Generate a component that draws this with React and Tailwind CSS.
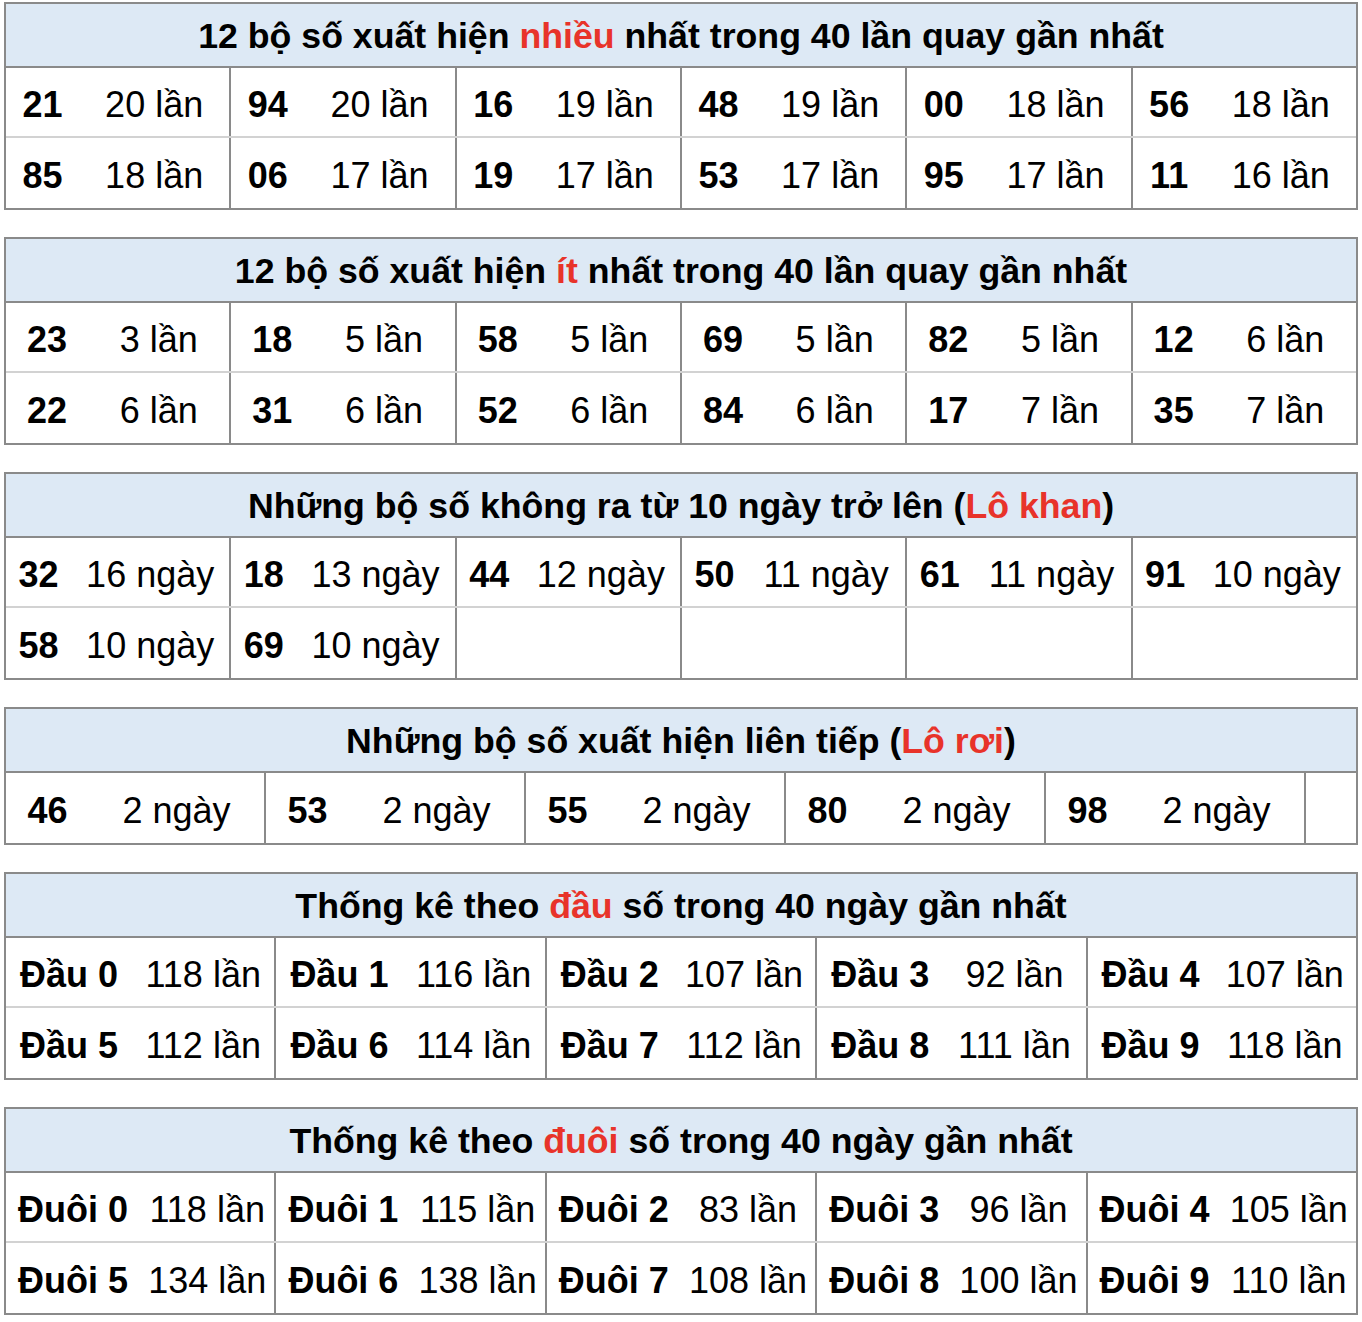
const RED = 'text-[#e8332a]'

const tables = [
  {
    title: <>12 bộ số xuất hiện <span className={RED}>nhiều</span> nhất trong 40 lần quay gần nhất</>,
    numW: 'w-[73px]',
    groupW: 'flex-1',
    rows: [
      [['21', '20 lần'], ['94', '20 lần'], ['16', '19 lần'], ['48', '19 lần'], ['00', '18 lần'], ['56', '18 lần']],
      [['85', '18 lần'], ['06', '17 lần'], ['19', '17 lần'], ['53', '17 lần'], ['95', '17 lần'], ['11', '16 lần']],
    ],
  },
  {
    title: <>12 bộ số xuất hiện <span className={RED}>ít</span> nhất trong 40 lần quay gần nhất</>,
    numW: 'w-[82px]',
    groupW: 'flex-1',
    rows: [
      [['23', '3 lần'], ['18', '5 lần'], ['58', '5 lần'], ['69', '5 lần'], ['82', '5 lần'], ['12', '6 lần']],
      [['22', '6 lần'], ['31', '6 lần'], ['52', '6 lần'], ['84', '6 lần'], ['17', '7 lần'], ['35', '7 lần']],
    ],
  },
  {
    title: <>Những bộ số không ra từ 10 ngày trở lên (<span className={RED}>Lô khan</span>)</>,
    numW: 'w-[65px]',
    groupW: 'flex-1',
    rows: [
      [['32', '16 ngày'], ['18', '13 ngày'], ['44', '12 ngày'], ['50', '11 ngày'], ['61', '11 ngày'], ['91', '10 ngày']],
      [['58', '10 ngày'], ['69', '10 ngày'], ['', ''], ['', ''], ['', ''], ['', '']],
    ],
  },
  {
    title: <>Những bộ số xuất hiện liên tiếp (<span className={RED}>Lô rơi</span>)</>,
    numW: 'w-[83px]',
    groupW: 'w-[260px]',
    trailing: true,
    rows: [
      [['46', '2 ngày'], ['53', '2 ngày'], ['55', '2 ngày'], ['80', '2 ngày'], ['98', '2 ngày']],
    ],
  },
  {
    title: <>Thống kê theo <span className={RED}>đầu</span> số trong 40 ngày gần nhất</>,
    numW: 'w-[126px]',
    groupW: 'flex-1',
    rows: [
      [['Đầu 0', '118 lần'], ['Đầu 1', '116 lần'], ['Đầu 2', '107 lần'], ['Đầu 3', '92 lần'], ['Đầu 4', '107 lần']],
      [['Đầu 5', '112 lần'], ['Đầu 6', '114 lần'], ['Đầu 7', '112 lần'], ['Đầu 8', '111 lần'], ['Đầu 9', '118 lần']],
    ],
  },
  {
    title: <>Thống kê theo <span className={RED}>đuôi</span> số trong 40 ngày gần nhất</>,
    numW: 'w-[134px]',
    groupW: 'flex-1',
    rows: [
      [['Đuôi 0', '118 lần'], ['Đuôi 1', '115 lần'], ['Đuôi 2', '83 lần'], ['Đuôi 3', '96 lần'], ['Đuôi 4', '105 lần']],
      [['Đuôi 5', '134 lần'], ['Đuôi 6', '138 lần'], ['Đuôi 7', '108 lần'], ['Đuôi 8', '100 lần'], ['Đuôi 9', '110 lần']],
    ],
  },
]

const StatTable = ({ table }) => (
  <div className="border-2 border-[#8a8a8a] bg-white">
    {/* Header */}
    <div className="h-[64px] pt-[3px] bg-[#dde9f5] border-b-2 border-[#8a8a8a] flex items-center justify-center font-bold text-[35.7px] leading-none">
      <span>{table.title}</span>
    </div>

    {table.rows.map((row, ri) => (
      <div
        key={ri}
        className={`flex h-[70px] ${ri < table.rows.length - 1 ? 'border-b-2 border-[#d2d2d2]' : ''}`}
      >
        {row.map(([num, count], ci) => {
          const last = ci === row.length - 1 && !table.trailing
          return (
            <div
              key={ci}
              className={`${table.groupW} flex items-center pt-[6px] ${last ? '' : 'border-r-2 border-[#8a8a8a]'}`}
            >
              <div className={`${table.numW} shrink-0 text-center font-bold`}>{num}</div>
              <div className="flex-1 text-center">{count}</div>
            </div>
          )
        })}
        {table.trailing && <div className="flex-1" />}
      </div>
    ))}
  </div>
)

export default function App() {
  return (
    <div
      className="w-[1362px] bg-white text-black text-[36px] leading-none px-[4px] pt-[2px] pb-[6px] flex flex-col gap-[27px]"
      style={{ fontFamily: '"Liberation Sans", Arial, sans-serif' }}
    >
      {tables.map((t, i) => (
        <StatTable key={i} table={t} />
      ))}
    </div>
  )
}
